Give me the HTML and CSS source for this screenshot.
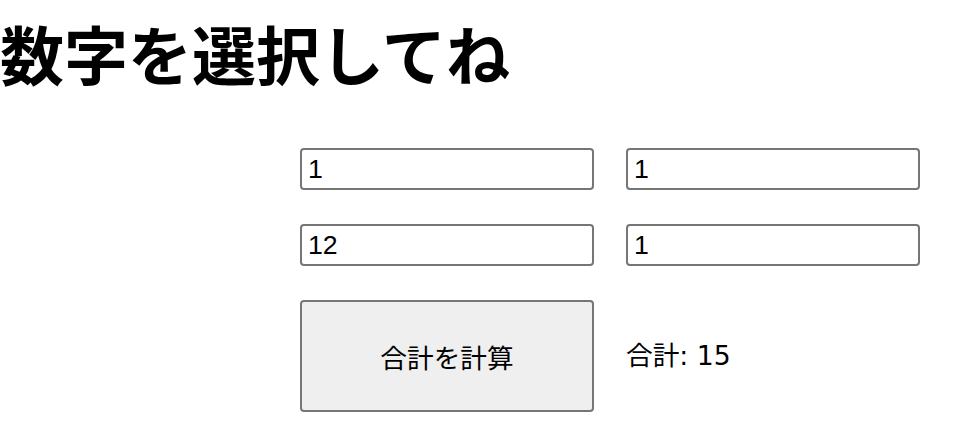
FILE: index.html
```html
<!DOCTYPE html>
<html lang="ja">
<head>
  <meta charset="UTF-8" />
  <meta name="viewport" content="width=device-width, initial-scale=1.0"/>
  <title>数字を選択してね</title>
  <link rel="stylesheet" href="styles.css">
</head>
<body>
  <h1 class="title">数字を選択してね</h1>

  <div class="calc">
    <input class="num" type="text" value="1">
    <input class="num" type="text" value="1">
    <input class="num" type="text" value="12">
    <input class="num" type="text" value="1">
    <button class="calc-btn" type="button">合計を計算</button>
    <div class="result">合計: 15</div>
  </div>
</body>
</html>
```

FILE: styles.css
```css
body {
  margin: 0;
  background: #fff;
  color: #000;
  font-family: "Liberation Sans", "Noto Sans CJK JP", sans-serif;
}

.title {
  margin: 0;
  padding-top: 20px;
  font-family: "Noto Sans CJK JP", sans-serif;
  font-size: 64px;
  font-weight: 700;
  line-height: 1;
}

.calc {
  display: grid;
  grid-template-columns: 294px 294px;
  grid-template-rows: 42px 42px 112px;
  column-gap: 32px;
  row-gap: 34px;
  align-items: center;
  margin: 64px 0 0 300px;
  width: max-content;
}

.num {
  box-sizing: border-box;
  width: 294px;
  height: 42px;
  margin: 0;
  padding: 2px 6px;
  border: 2px solid #767676;
  border-radius: 4px;
  font-family: "Liberation Sans", sans-serif;
  font-size: 26.67px;
  color: #000;
  background: #fff;
}

.calc-btn {
  box-sizing: border-box;
  width: 294px;
  height: 112px;
  margin: 0;
  border: 2px solid #767676;
  border-radius: 4px;
  background: #efefef;
  font-family: "Noto Sans CJK JP", sans-serif;
  font-size: 26.67px;
  color: #000;
}

.result {
  font-family: "DejaVu Sans", "Noto Sans CJK JP", sans-serif;
  font-size: 26.67px;
  line-height: 1;
}
```
